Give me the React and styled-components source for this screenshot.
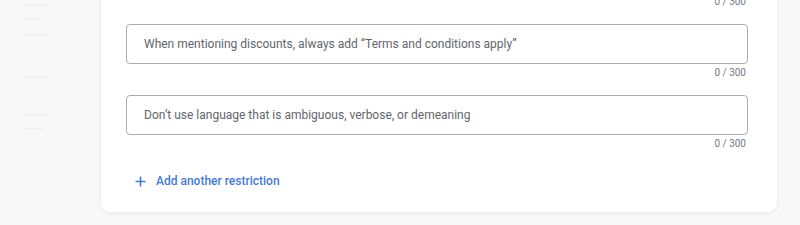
import React from 'react';
import styled, { createGlobalStyle } from 'styled-components';

const GlobalStyle = createGlobalStyle`
  html, body {
    margin: 0;
    padding: 0;
    background: #f8f8f9;
    font-family: Roboto, 'Liberation Sans', sans-serif;
  }
`;

const Page = styled.div`
  display: flex;
  width: 800px;
  height: 225px;
  overflow: hidden;
`;

const Sidebar = styled.div`
  width: 100px;
  flex-shrink: 0;
  display: flex;
  flex-direction: column;
  padding: 4px 0 0 24px;
  box-sizing: border-box;
`;

const Ghost = styled.div`
  height: 2px;
  width: ${(p) => p.w}px;
  margin-top: ${(p) => p.gap || 0}px;
  background: #f2f3f4;
  border-radius: 1px;
`;

const Card = styled.div`
  width: 678px;
  height: 213px;
  flex-shrink: 0;
  background: #ffffff;
  border: 1px solid #eff0f1;
  border-top: none;
  border-radius: 0 0 10px 10px;
  box-shadow: 0 1px 3px rgba(60, 64, 67, 0.06);
  padding: 0 29px 0 25px;
  box-sizing: border-box;
  display: flex;
  flex-direction: column;
`;

const Counter = styled.div`
  font-size: 10px;
  line-height: 14px;
  color: #75797e;
  text-align: right;
  padding-right: 2px;
  margin-top: ${(p) => p.top}px;
  margin-bottom: 15px;
`;

const Field = styled.div`
  height: 40px;
  flex-shrink: 0;
  border: 1px solid #a9acb0;
  border-radius: 4px;
  box-sizing: border-box;
  display: flex;
  align-items: center;
  padding-left: 17px;
  font-size: 12px;
  color: #62666a;
`;

const AddButton = styled.div`
  display: flex;
  align-items: center;
  gap: 10px;
  height: 24px;
  margin-top: 3px;
  padding-left: 9px;
  color: #3f7bdc;
  font-size: 12px;
  font-weight: 500;
`;

const restrictions = [
  'When mentioning discounts, always add “Terms and conditions apply”',
  'Don’t use language that is ambiguous, verbose, or demeaning',
];

const PlusIcon = () => (
  <svg width="11" height="11" viewBox="0 0 11 11">
    <path d="M5.5 0.5v10M0.5 5.5h10" stroke="#3f7bdc" strokeWidth="1.6" fill="none" />
  </svg>
);

const App = () => (
  <>
    <GlobalStyle />
    <Page>
      <Sidebar>
        <Ghost w={26} />
        <Ghost w={20} gap={12} />
        <Ghost w={28} gap={14} />
        <Ghost w={24} gap={40} />
        <Ghost w={30} gap={36} />
        <Ghost w={22} gap={12} />
      </Sidebar>
      <Card>
        <Counter top={-5}>0 / 300</Counter>
        {restrictions.map((text, i) => (
          <React.Fragment key={i}>
            <Field>{text}</Field>
            <Counter top={2}>0 / 300</Counter>
          </React.Fragment>
        ))}
        <AddButton>
          <PlusIcon />
          Add another restriction
        </AddButton>
      </Card>
    </Page>
  </>
);

export default App;
